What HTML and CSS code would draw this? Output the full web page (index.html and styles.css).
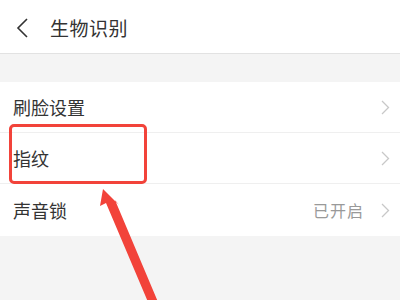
FILE: index.html
```html
<!DOCTYPE html>
<html lang="zh">
<head>
<meta charset="utf-8">
<link rel="stylesheet" href="styles.css">
</head>
<body>
<div class="page">
  <header class="topbar">
    <svg class="back" width="14" height="22" viewBox="0 0 14 22"><path d="M11 2 L2 11 L11 20" fill="none" stroke="#333" stroke-width="1.6"/></svg>
    <span class="title">生物识别</span>
  </header>
  <div class="spacer"></div>
  <ul class="list">
    <li class="row"><span class="label">刷脸设置</span><span class="right"><svg class="chev" width="9" height="15" viewBox="0 0 9 15"><path d="M1 1 L7.5 7.5 L1 14" fill="none" stroke="#c8c8c8" stroke-width="1.3"/></svg></span></li>
    <li class="row"><span class="label">指纹</span><span class="right"><svg class="chev" width="9" height="15" viewBox="0 0 9 15"><path d="M1 1 L7.5 7.5 L1 14" fill="none" stroke="#c8c8c8" stroke-width="1.3"/></svg></span></li>
    <li class="row"><span class="label">声音锁</span><span class="right"><span class="status">已开启</span><svg class="chev" width="9" height="15" viewBox="0 0 9 15"><path d="M1 1 L7.5 7.5 L1 14" fill="none" stroke="#c8c8c8" stroke-width="1.3"/></svg></span></li>
  </ul>
  <div class="highlight"></div>
  <svg class="arrow" width="400" height="300" viewBox="0 0 400 300">
    <polygon points="103,189 100,206 106,203 148,302 158,302 115,200 119,205" fill="#f2433a"/>
  </svg>
</div>
</body>
</html>
```
FILE: styles.css
```css
* { box-sizing: border-box; margin: 0; padding: 0; }
html, body { width: 400px; height: 300px; overflow: hidden; }
body {
  background: #f4f4f4;
  font-family: "Noto Sans CJK SC", "Noto Sans", sans-serif;
  color: #333;
}
.page { position: relative; width: 400px; height: 300px; }
.topbar {
  height: 54px;
  background: #fff;
  border-bottom: 1px solid #e2e2e2;
  display: flex;
  align-items: center;
  padding-left: 16px;
  padding-top: 2px;
}
.back { margin-right: 20px; }
.title { font-size: 19px; color: #333; letter-spacing: 0.5px; }
.spacer { height: 28px; }
.list { list-style: none; background: #fff; }
.row {
  height: 51px;
  display: flex;
  align-items: center;
  justify-content: space-between;
  padding: 0 10px 0 13px;
  border-bottom: 1px solid #efefef;
}
.row:last-child { border-bottom: none; height: 52px; }
.label { font-size: 18px; color: #333; }
.right { display: flex; align-items: center; }
.status { font-size: 16px; color: #999; margin-right: 17px; letter-spacing: 1px; }
.highlight {
  position: absolute;
  left: 9px;
  top: 124px;
  width: 138px;
  height: 60px;
  border: 3px solid #f2433a;
  border-radius: 5px;
}
.arrow { position: absolute; left: 0; top: 0; }
```
